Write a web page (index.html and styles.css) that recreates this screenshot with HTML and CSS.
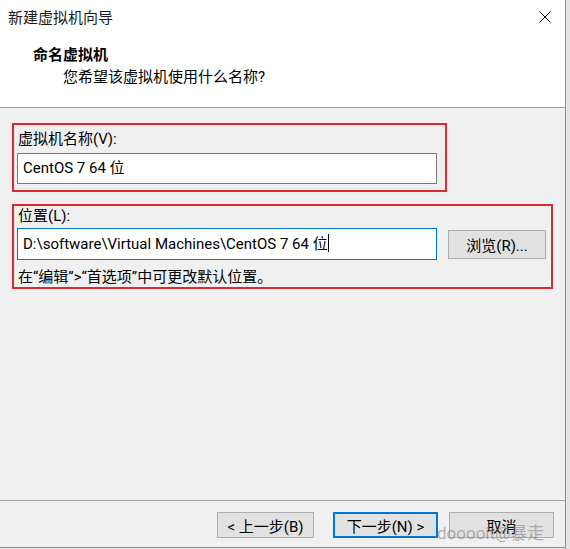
FILE: index.html
```html
<!DOCTYPE html>
<html lang="zh-CN">
<head>
    <meta charset="UTF-8">
    <meta name="viewport" content="width=device-width, initial-scale=1.0">
    <title>新建虚拟机向导</title>
    <link rel="stylesheet" href="styles.css">
</head>
<body>
    <div class="window">
        <!-- White top part: title bar and page heading -->
        <header class="header">
            <div class="titlebar">
                <span class="title">新建虚拟机向导</span>
                <svg class="close" width="12" height="12" viewBox="0 0 12 12">
                    <path d="M0.5 0.5 L11.5 11.5 M11.5 0.5 L0.5 11.5" stroke="#000" stroke-width="1" fill="none"/>
                </svg>
            </div>
            <h1 class="heading">命名虚拟机</h1>
            <p class="subheading">您希望该虚拟机使用什么名称?</p>
        </header>

        <!-- Form fields -->
        <section class="content">
            <div class="group group-name">
                <div class="label">虚拟机名称(V):</div>
                <div class="textbox">CentOS 7 64 位</div>
            </div>

            <div class="group group-location">
                <div class="label">位置(L):</div>
                <div class="row">
                    <div class="textbox focused">D:\software\Virtual Machines\CentOS 7 64 位<span class="caret"></span></div>
                    <button class="btn browse">浏览(R)...</button>
                </div>
                <div class="hint">在“编辑”&gt;“首选项”中可更改默认位置。</div>
            </div>
        </section>

        <!-- Wizard buttons -->
        <footer class="footer">
            <button class="btn back">&lt; 上一步(B)</button>
            <button class="btn next">下一步(N) &gt;</button>
            <button class="btn cancel">取消</button>
            <span class="watermark">dooooit@暴走</span>
        </footer>
    </div>
</body>
</html>
```

FILE: styles.css
```css
* {
    margin: 0;
    padding: 0;
    box-sizing: border-box;
    font-family: Roboto, "Noto Sans CJK SC", sans-serif;
}

body {
    background-color: #e4e4e4;
    font-size: 15px;
    color: #000;
}

.window {
    width: 566px;
    height: 548px;
    display: flex;
    flex-direction: column;
    background-color: #f0f0f0;
    border-right: 1px solid #8c8c8c;
    border-bottom: 1px solid #8c8c8c;
    position: relative;
}

.header {
    height: 108px;
    background-color: #fff;
    border-bottom: 1px solid #a0a0a0;
}

.titlebar {
    height: 32px;
    display: flex;
    align-items: center;
    justify-content: space-between;
    padding: 0 14px 0 8px;
}

.title {
    font-size: 15px;
    color: #1a1a1a;
}

.close {
    margin-top: 2px;
}

.heading {
    margin-top: 12px;
    padding-left: 33px;
    font-size: 15px;
    font-weight: 700;
    line-height: 22px;
}

.subheading {
    padding-left: 63px;
    font-size: 15px;
    line-height: 22px;
}

.content {
    flex: 1;
    padding: 15px 0 0 12px;
}

.group {
    border: 2px solid #dd2a30;
}

.group-name {
    width: 435px;
    padding: 4px 8px 6px 3px;
}

.group-location {
    width: 541px;
    margin-top: 12px;
    padding: 0 5px 0 3px;
}

.label {
    line-height: 20px;
    padding-left: 1px;
}

.group-name .label {
    margin-bottom: 4px;
}

.group-location .label {
    margin-bottom: 2px;
}

.textbox {
    width: 420px;
    height: 31px;
    background-color: #fff;
    border: 1px solid #7a7a7a;
    padding-left: 5px;
    line-height: 29px;
    white-space: nowrap;
}

.textbox.focused {
    border-color: #0078d7;
    height: 32px;
    line-height: 30px;
}

.caret {
    display: inline-block;
    width: 1px;
    height: 18px;
    background-color: #000;
    vertical-align: -3px;
}

.row {
    display: flex;
    align-items: center;
    gap: 11px;
}

.hint {
    margin-top: 7px;
    line-height: 20px;
    padding-left: 1px;
}

.btn {
    background-color: #e1e1e1;
    border: 1px solid #adadad;
    font-size: 15px;
    color: #000;
    height: 26px;
}

.browse {
    width: 98px;
    height: 29px;
}

.footer {
    height: 47px;
    border-top: 1px solid #a0a0a0;
    display: flex;
    justify-content: flex-end;
    align-items: flex-start;
    padding: 11px 11px 0 0;
}

.back {
    width: 97px;
}

.next {
    width: 105px;
    margin-left: 19px;
    border: 2px solid #0078d7;
}

.cancel {
    width: 105px;
    margin-left: 11px;
}

.watermark {
    position: absolute;
    left: 437px;
    bottom: 3px;
    font-size: 17px;
    color: rgba(130, 130, 130, 0.6);
}
```
